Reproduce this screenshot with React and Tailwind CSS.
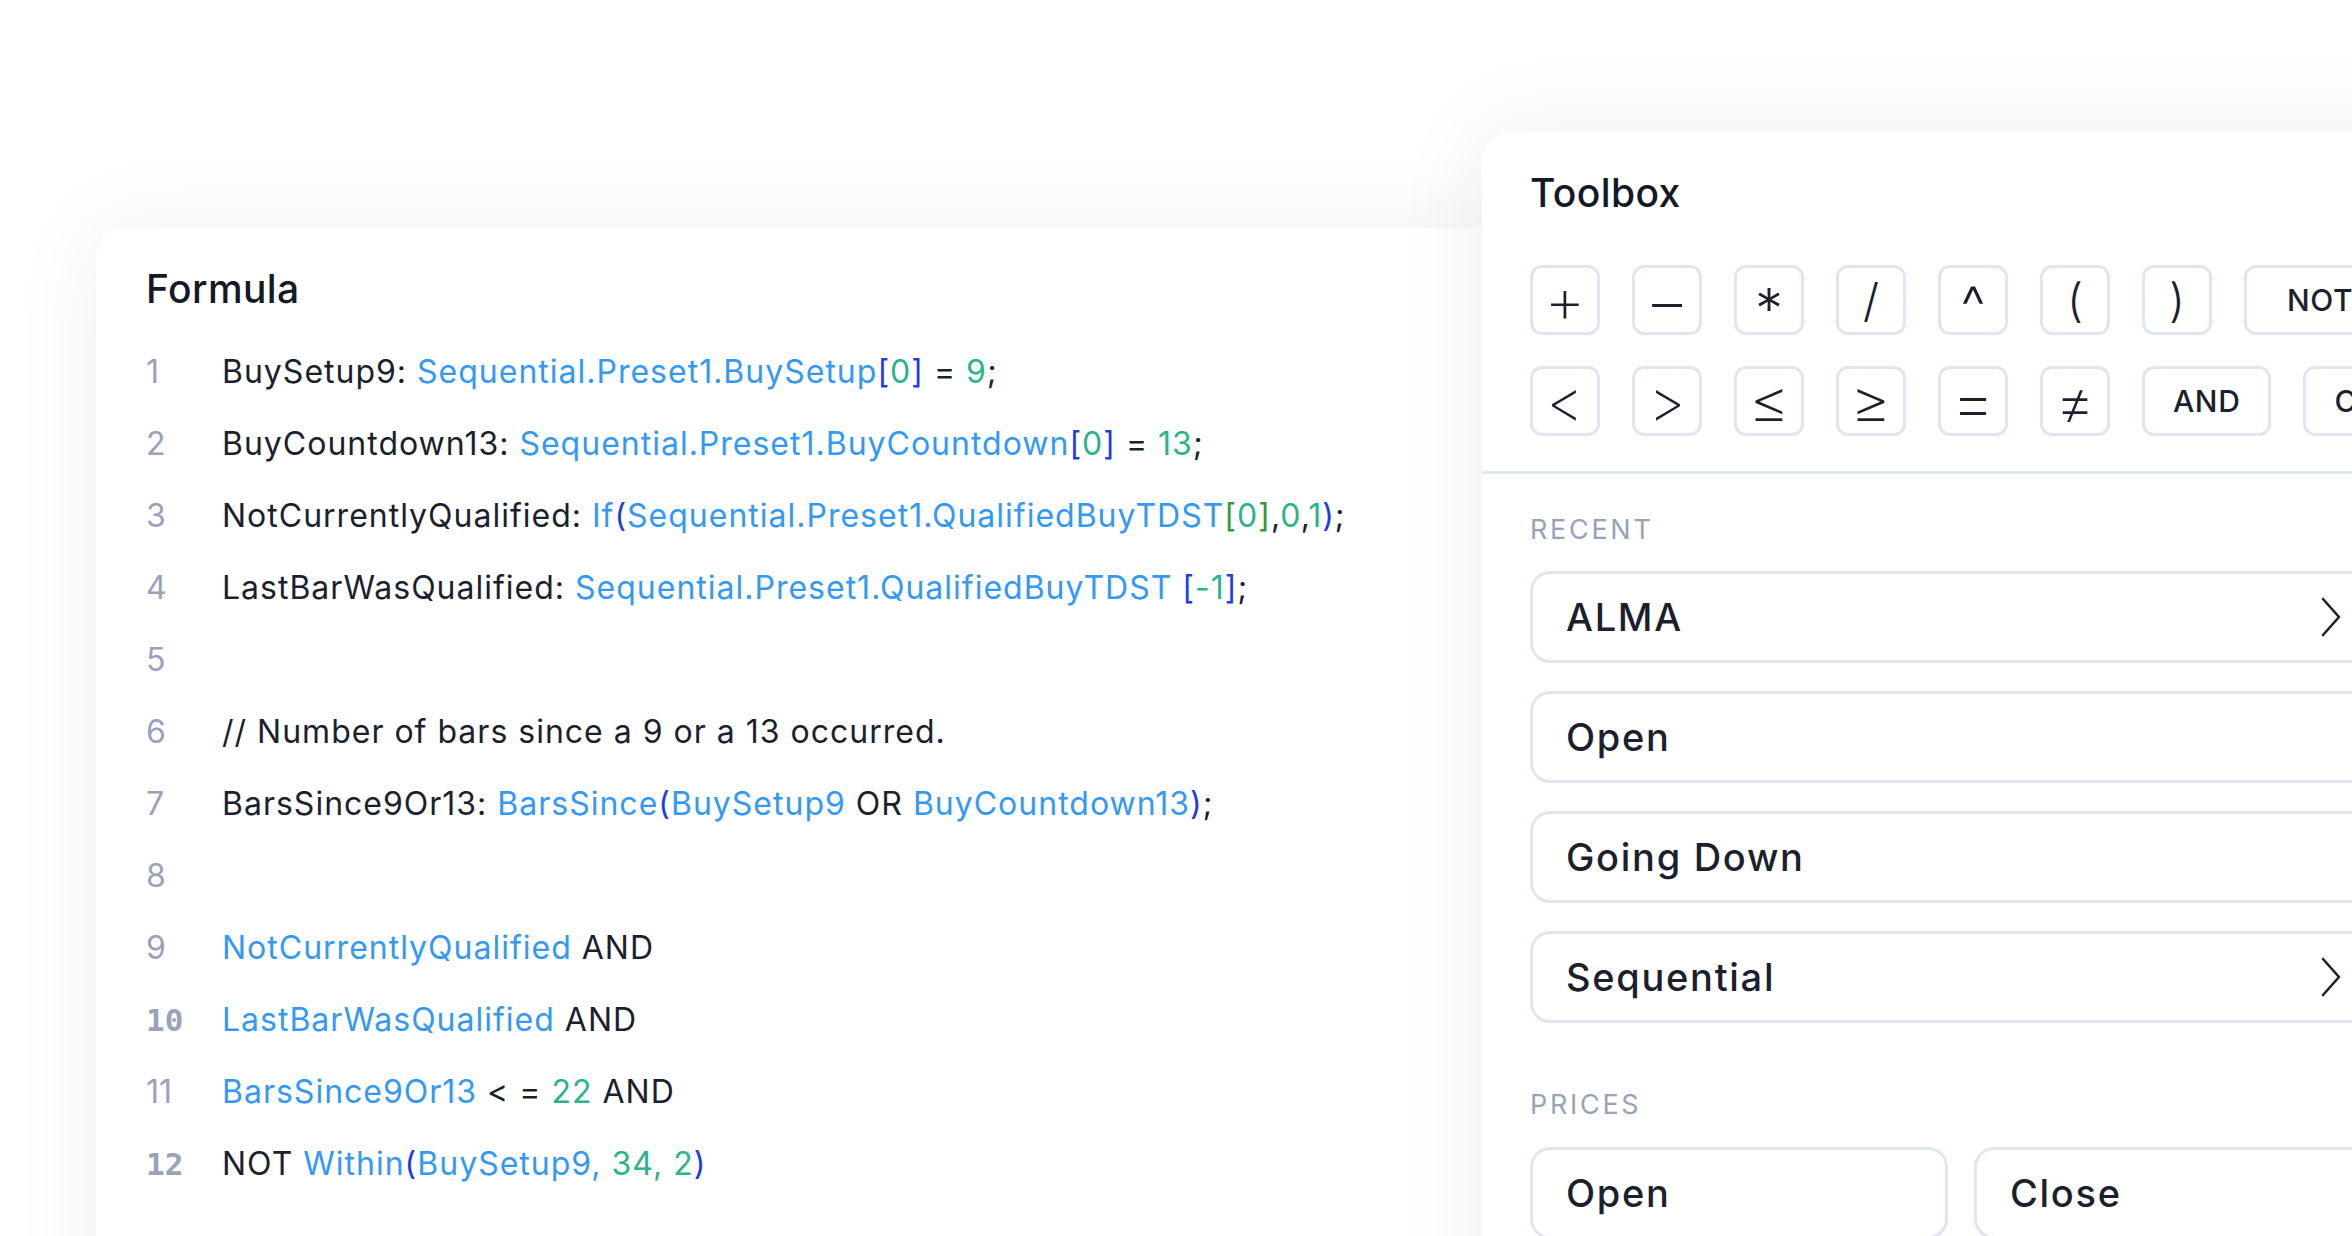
import React from "react";

const FONT = { fontFamily: "Inter, Lato, sans-serif" };

const tone = {
  t: "text-[#1b1f2e]",
  i: "text-[#3499f4]",
  n: "text-[#2bb38b]",
  b: "text-[#1c3cf2]",
  g: "text-[#2f9a3c]",
  p: "text-[#1f3ae6]",
};

const lines = [
  [["t", "BuySetup9: "], ["i", "Sequential.Preset1.BuySetup"], ["b", "["], ["n", "0"], ["b", "]"], ["t", " = "], ["n", "9"], ["t", ";"]],
  [["t", "BuyCountdown13: "], ["i", "Sequential.Preset1.BuyCountdown"], ["b", "["], ["n", "0"], ["b", "]"], ["t", " = "], ["n", "13"], ["t", ";"]],
  [["t", "NotCurrentlyQualified: "], ["i", "If"], ["p", "("], ["i", "Sequential.Preset1.QualifiedBuyTDST"], ["g", "["], ["n", "0"], ["g", "]"], ["t", ","], ["n", "0"], ["t", ","], ["n", "1"], ["p", ")"], ["t", ";"]],
  [["t", "LastBarWasQualified: "], ["i", "Sequential.Preset1.QualifiedBuyTDST "], ["b", "["], ["n", "-1"], ["b", "]"], ["t", ";"]],
  [],
  [["t", "// Number of bars since a 9 or a 13 occurred."]],
  [["t", "BarsSince9Or13: "], ["i", "BarsSince"], ["p", "("], ["i", "BuySetup9"], ["t", " OR "], ["i", "BuyCountdown13"], ["p", ")"], ["t", ";"]],
  [],
  [["i", "NotCurrentlyQualified"], ["t", " AND"]],
  [["i", "LastBarWasQualified"], ["t", " AND"]],
  [["i", "BarsSince9Or13"], ["t", " < = "], ["n", "22"], ["t", " AND"]],
  [["t", "NOT "], ["i", "Within"], ["p", "("], ["i", "BuySetup9, "], ["n", "34, 2"], ["p", ")"]],
];

// glyph size / nudge per operator
const ops1 = [
  ["+", "text-[64px] font-extralight"],
  ["−", "text-[70px] font-extralight"],
  ["*", "text-[56px] font-light translate-y-[9px]"],
  ["/", "text-[46px] font-light"],
  ["^", "text-[56px] font-light translate-y-[6px]"],
  ["(", "text-[46px] font-light"],
  [")", "text-[46px] font-light"],
];
const ops2 = [
  ["<", "text-[58px] font-extralight"],
  [">", "text-[58px] font-extralight"],
  ["≤", "text-[64px] font-extralight"],
  ["≥", "text-[64px] font-extralight"],
  ["=", "text-[70px] font-extralight"],
  ["≠", "text-[66px] font-extralight"],
];

const recent = [
  { name: "ALMA", more: true },
  { name: "Open" },
  { name: "Going Down" },
  { name: "Sequential", more: true },
];

const Chevron = () => (
  <svg width="22" height="42" viewBox="0 0 22 42" fill="none">
    <path d="M3 3 L19 21 L3 39" stroke="#1b1f2e" strokeWidth="2.6" strokeLinecap="round" strokeLinejoin="round" />
  </svg>
);

const btn =
  "h-[70px] shrink-0 flex items-center rounded-[12px] border-[3px] border-[#e0e6f0] bg-white text-[#1b1f2e]";

const OpButton = ({ label, glyph }) => (
  <button type="button" className={`${btn} w-[70px] justify-center`}>
    <span className={`inline-block leading-[40px] ${glyph}`}>{label}</span>
  </button>
);

const WordButton = ({ label, pad = "px-[28px]" }) => (
  <button type="button" className={`${btn} ${pad} text-[30px] leading-none font-medium tracking-[0.02em]`}>
    {label}
  </button>
);

const Label = ({ children, className = "" }) => (
  <div className={`text-[27px] leading-[32px] tracking-[0.1em] text-[#97a2bb] ${className}`}>{children}</div>
);

export default function App() {
  return (
    <div className="h-[1236px] w-[2352px] overflow-hidden bg-white" style={FONT}>
      <div className="flex items-start pl-[96px] pt-[132px]">
        {/* formula card */}
        <div className="mt-[96px] w-[1420px] h-[1200px] shrink-0 rounded-[30px] bg-white shadow-[0_0_90px_rgba(30,41,59,0.07)] pl-[50px] pt-[37px]">
          <div className="text-[39px] leading-[48px] font-medium tracking-[0.01em] text-[#141827]">Formula</div>
          <div className="mt-[23px] flex flex-col">
            {lines.map((tokens, idx) => (
              <div key={idx} className="flex items-center h-[72px] text-[32px] whitespace-pre">
                <span
                  className={`w-[76px] shrink-0 text-[#97a2bb] ${
                    idx === 9 || idx === 11 ? "font-['DejaVu_Sans_Mono'] text-[31px] font-semibold" : ""
                  }`}
                >
                  {idx + 1}
                </span>
                <span className="tracking-[1px]">
                  {tokens.map(([k, s], j) => (
                    <span key={j} className={tone[k]}>
                      {s}
                    </span>
                  ))}
                </span>
              </div>
            ))}
          </div>
        </div>

        {/* toolbox */}
        <div className="relative z-10 -ml-[34px] w-[960px] h-[1200px] shrink-0 rounded-[30px] bg-white shadow-[0_0_90px_rgba(30,41,59,0.08)] pt-[37px]">
          <div className="px-[48px]">
            <div className="text-[39px] leading-[48px] font-medium tracking-[0.01em] text-[#141827]">Toolbox</div>
            <div className="mt-[48px] flex gap-[32px]">
              {ops1.map(([s, g]) => (
                <OpButton key={s} label={s} glyph={g} />
              ))}
              <WordButton label="NOT" pad="pl-[40px] pr-[28px]" />
            </div>
            <div className="mt-[31px] flex gap-[32px]">
              {ops2.map(([s, g]) => (
                <OpButton key={s} label={s} glyph={g} />
              ))}
              <WordButton label="AND" />
              <WordButton label="OR" />
            </div>
          </div>
          <div className="mt-[35px] h-[3px] bg-[#e2e8f1]" />
          <div className="px-[48px]">
            <Label className="mt-[40px]">RECENT</Label>
            <div className="mt-[25px] flex flex-col gap-[28px]">
              {recent.map((r) => (
                <div
                  key={r.name}
                  className="w-[860px] h-[92px] flex items-center justify-between rounded-[20px] border-[3px] border-[#e0e6f0] pl-[33px] pr-[45px]"
                >
                  <span className="text-[38px] font-medium tracking-[0.045em] text-[#1b1f2e]">{r.name}</span>
                  {r.more && <Chevron />}
                </div>
              ))}
            </div>
            <Label className="mt-[66px]">PRICES</Label>
            <div className="mt-[26px] flex gap-[26px]">
              {["Open", "Close"].map((s) => (
                <div
                  key={s}
                  className="w-[418px] h-[92px] shrink-0 flex items-center rounded-[20px] border-[3px] border-[#e0e6f0] pl-[33px]"
                >
                  <span className="text-[38px] font-medium tracking-[0.045em] text-[#1b1f2e]">{s}</span>
                </div>
              ))}
            </div>
          </div>
        </div>
      </div>
    </div>
  );
}
